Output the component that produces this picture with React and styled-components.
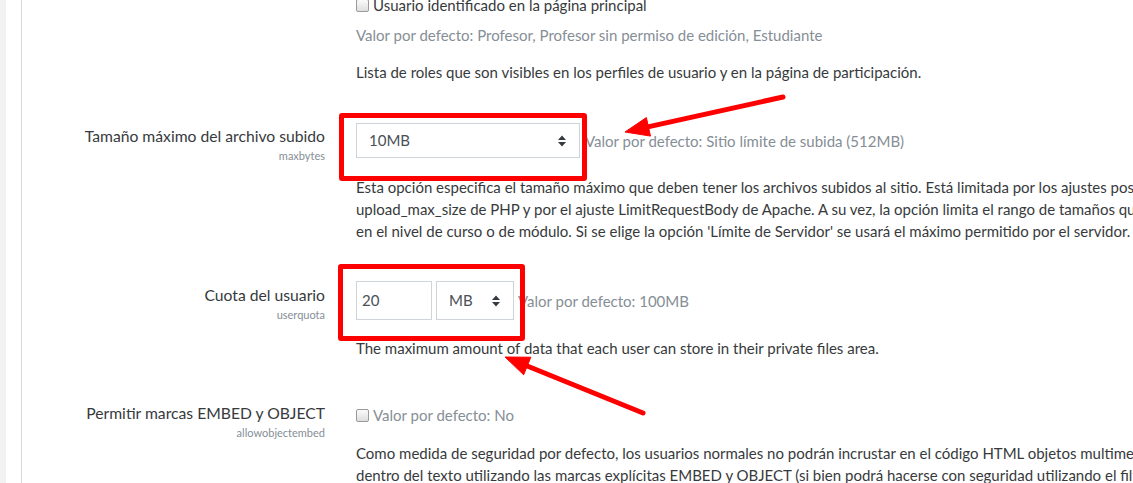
import React from "react";
import styled, { createGlobalStyle } from "styled-components";

const GlobalStyle = createGlobalStyle`
  html, body { margin: 0; padding: 0; background: #fff; }
  body {
    font-family: Lato, "Liberation Sans", sans-serif;
    font-size: 15px;
    line-height: 1.5;
    color: #373a3c;
    overflow: hidden;
  }
`;

const Page = styled.div`
  position: relative;
  display: flex;
  width: 1133px;
  height: 483px;
  overflow: hidden;
  background: #fff;
`;

const Gutter = styled.div`
  flex: 0 0 6px;
  background: #f2f2f2;
`;

const Spacer = styled.div`
  flex: 0 0 15px;
  background: #fff;
`;

const Main = styled.main`
  flex: 1;
  min-width: 0;
  border-left: 1px solid #d9d9d9;
`;

const Setting = styled.section`
  display: grid;
  grid-template-columns: 303px max-content;
  column-gap: 31px;
  margin-top: ${(p) => p.$mt}px;
`;

const LabelCol = styled.div`
  text-align: right;
  padding-top: ${(p) => p.$pt || 0}px;
`;

const LabelText = styled.div`
  font-size: 15.7px;
  line-height: 22px;
  color: #373a3c;
  white-space: nowrap;
`;

const LabelKey = styled.div`
  font-size: 11px;
  line-height: 18px;
  color: #868e96;
`;

const ContentCol = styled.div`
  padding-top: ${(p) => p.$pt || 0}px;
  margin-top: ${(p) => p.$mt || 0}px;
  white-space: nowrap;
`;

const ControlRow = styled.div`
  display: flex;
  align-items: center;
  gap: ${(p) => p.$gap || 5}px;
`;

const SelectBox = styled.div`
  box-sizing: border-box;
  width: ${(p) => p.$w}px;
  height: ${(p) => p.$h}px;
  border: 1px solid #ced4da;
  background: #fff;
  display: flex;
  align-items: center;
  justify-content: space-between;
  padding: 0 13px 0 12px;
  color: #495057;
`;

const TextInput = styled.div`
  box-sizing: border-box;
  width: ${(p) => p.$w}px;
  height: ${(p) => p.$h}px;
  border: 1px solid #ced4da;
  background: #fff;
  display: flex;
  align-items: center;
  padding-left: 5px;
  color: #495057;
`;

const Muted = styled.span`
  color: #868e96;
  line-height: 22px;
`;

const CheckLine = styled.div`
  display: flex;
  align-items: center;
  gap: 4px;
  line-height: 22px;
  margin-top: ${(p) => p.$mt || 0}px;
  color: ${(p) => (p.$muted ? "#868e96" : "#373a3c")};
`;

const Checkbox = styled.span`
  box-sizing: border-box;
  display: inline-block;
  width: 13px;
  height: 13px;
  border: 1px solid #9a9a9a;
  border-radius: 2px;
  background: linear-gradient(#fbfbfb, #dedede);
  flex-shrink: 0;
`;

const InfoLine = styled.div`
  color: #868e96;
  line-height: 22px;
  margin-top: ${(p) => p.$mt || 0}px;
`;

const Description = styled.div`
  margin-top: ${(p) => p.$mt || 0}px;
  line-height: 22px;
  color: #373a3c;
`;

const Line = styled.div`
  white-space: nowrap;
`;

const Highlight = styled.div`
  position: absolute;
  box-sizing: border-box;
  left: ${(p) => p.$x}px;
  top: ${(p) => p.$y}px;
  width: ${(p) => p.$w}px;
  height: ${(p) => p.$h}px;
  border: 5px solid #ff0000;
  border-radius: 3px;
  pointer-events: none;
`;

const ArrowLayer = styled.svg`
  position: absolute;
  left: 0;
  top: 0;
  width: 1133px;
  height: 483px;
  pointer-events: none;
`;

const SortIcon = () => (
  <svg width="8" height="12" viewBox="0 0 8 12" aria-hidden="true">
    <path d="M0 5 L4 0.5 L8 5 Z" fill="#343a40" />
    <path d="M0 7 L4 11.5 L8 7 Z" fill="#343a40" />
  </svg>
);

function arrowHead(tail, tip, len = 24, half = 9.5) {
  const dx = tip[0] - tail[0];
  const dy = tip[1] - tail[1];
  const l = Math.hypot(dx, dy);
  const ux = dx / l;
  const uy = dy / l;
  const bx = tip[0] - ux * len;
  const by = tip[1] - uy * len;
  const nx = -uy;
  const ny = ux;
  return {
    base: [bx + ux * 4, by + uy * 4],
    points: `${tip[0]},${tip[1]} ${bx + nx * half},${by + ny * half} ${bx - nx * half},${by - ny * half}`,
  };
}

const Arrow = ({ tail, tip }) => {
  const h = arrowHead(tail, tip);
  return (
    <g>
      <line
        x1={tail[0]}
        y1={tail[1]}
        x2={h.base[0]}
        y2={h.base[1]}
        stroke="#ff0000"
        strokeWidth="5"
        strokeLinecap="round"
      />
      <polygon points={h.points} fill="#ff0000" stroke="#ff0000" strokeWidth="1" strokeLinejoin="round" />
    </g>
  );
};

export default function App() {
  return (
    <>
      <GlobalStyle />
      <Page>
        <Gutter />
        <Spacer />
        <Main>
          <Setting $mt={0}>
            <LabelCol />
            <ContentCol $mt={-6}>
              <CheckLine>
                <Checkbox />
                <span>Usuario identificado en la página principal</span>
              </CheckLine>
              <InfoLine $mt={8}>Valor por defecto: Profesor, Profesor sin permiso de edición, Estudiante</InfoLine>
              <Description $mt={15}>
                <Line>Lista de roles que son visibles en los perfiles de usuario y en la página de participación.</Line>
              </Description>
            </ContentCol>
          </Setting>

          <Setting $mt={40}>
            <LabelCol $pt={2}>
              <LabelText>Tamaño máximo del archivo subido</LabelText>
              <LabelKey>maxbytes</LabelKey>
            </LabelCol>
            <ContentCol>
              <ControlRow $gap={5}>
                <SelectBox $w={224} $h={35}>
                  <span>10MB</span>
                  <SortIcon />
                </SelectBox>
                <Muted>Valor por defecto: Sitio límite de subida (512MB)</Muted>
              </ControlRow>
              <Description $mt={18}>
                <Line>Esta opción especifica el tamaño máximo que deben tener los archivos subidos al sitio. Está limitada por los ajustes post_max_size y</Line>
                <Line>upload_max_size de PHP y por el ajuste LimitRequestBody de Apache. A su vez, la opción limita el rango de tamaños que pueden elegirse</Line>
                <Line>en el nivel de curso o de módulo. Si se elige la opción 'Límite de Servidor' se usará el máximo permitido por el servidor.</Line>
              </Description>
            </ContentCol>
          </Setting>

          <Setting $mt={39}>
            <LabelCol $pt={3}>
              <LabelText>Cuota del usuario</LabelText>
              <LabelKey>userquota</LabelKey>
            </LabelCol>
            <ContentCol>
              <ControlRow $gap={4}>
                <TextInput $w={76} $h={39}>20</TextInput>
                <SelectBox $w={78} $h={39}>
                  <span>MB</span>
                  <SortIcon />
                </SelectBox>
                <Muted>Valor por defecto: 100MB</Muted>
              </ControlRow>
              <Description $mt={17}>
                <Line>The maximum amount of data that each user can store in their private files area.</Line>
              </Description>
            </ContentCol>
          </Setting>

          <Setting $mt={43}>
            <LabelCol>
              <LabelText>Permitir marcas EMBED y OBJECT</LabelText>
              <LabelKey>allowobjectembed</LabelKey>
            </LabelCol>
            <ContentCol $pt={2}>
              <CheckLine $muted>
                <Checkbox />
                <span>Valor por defecto: No</span>
              </CheckLine>
              <Description $mt={16}>
                <Line>Como medida de seguridad por defecto, los usuarios normales no podrán incrustar en el código HTML objetos multimedia (como Flash)</Line>
                <Line>dentro del texto utilizando las marcas explícitas EMBED y OBJECT (si bien podrá hacerse con seguridad utilizando el filtro de medios).</Line>
              </Description>
            </ContentCol>
          </Setting>
        </Main>

        <Highlight $x={339} $y={113} $w={248} $h={68} />
        <Highlight $x={338} $y={264} $w={187} $h={77} />
        <ArrowLayer viewBox="0 0 1133 483">
          <Arrow tail={[783, 97]} tip={[625, 132]} />
          <Arrow tail={[643, 413]} tip={[505, 357]} />
        </ArrowLayer>
      </Page>
    </>
  );
}
